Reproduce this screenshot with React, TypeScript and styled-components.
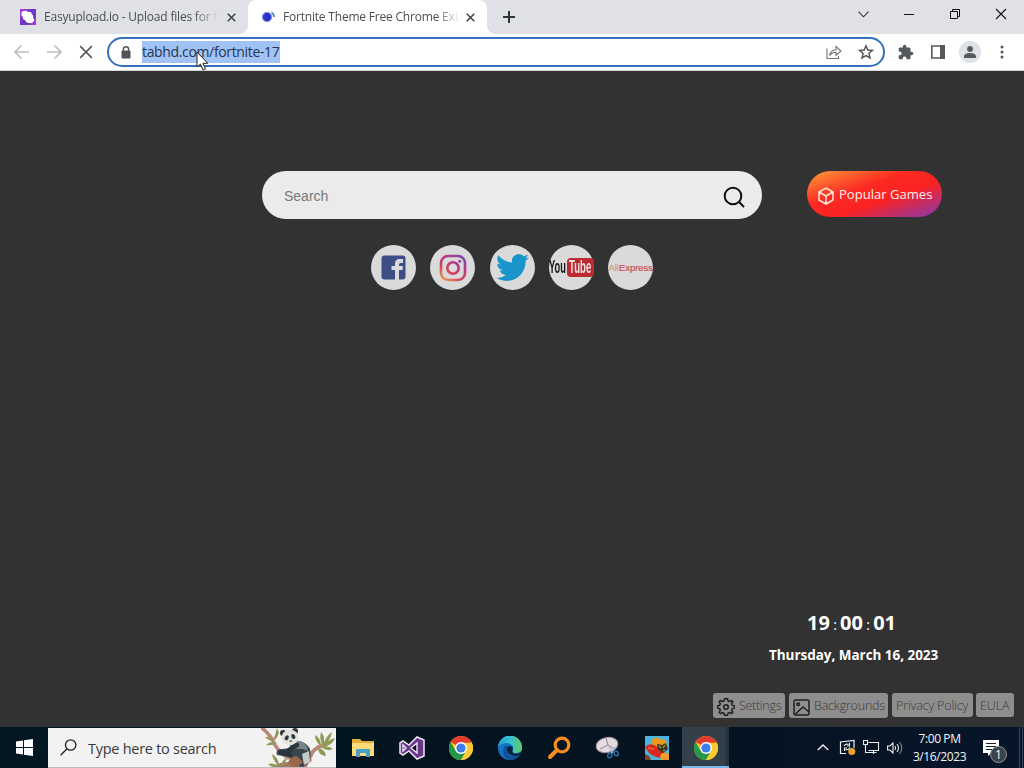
import React from "react";
import styled, { createGlobalStyle } from "styled-components";

const GlobalStyle = createGlobalStyle`
  * { box-sizing: border-box; }
  body { margin: 0; overflow: hidden; background: #323232; }
`;

const Screen = styled.div`
  width: 1024px;
  height: 768px;
  display: flex;
  flex-direction: column;
  overflow: hidden;
  font-family: "Open Sans", "Noto Sans", sans-serif;
  svg { display: block; flex: none; }
`;

const Label = styled.span<{ $size: number; $spacing?: number; $weight?: number; $color?: string }>`
  font-size: ${(p) => p.$size}px;
  letter-spacing: ${(p) => p.$spacing ?? 0}px;
  font-weight: ${(p) => p.$weight ?? 400};
  color: ${(p) => p.$color ?? "inherit"};
  white-space: nowrap;
`;

/* Browser frame */
const TabStrip = styled.div`
  height: 34px;
  flex: none;
  display: flex;
  background: #dfe1e6;
`;

const Tab = styled.div<{ $active?: boolean; $width: number; $pad: number }>`
  position: relative;
  width: ${(p) => p.$width}px;
  padding-left: ${(p) => p.$pad}px;
  display: flex;
  align-items: center;
  background: ${(p) => (p.$active ? "#fff" : "transparent")};
  border-radius: 8px 8px 0 0;
  color: #4b4d50;
  &::before, &::after {
    content: "";
    display: ${(p) => (p.$active ? "block" : "none")};
    position: absolute;
    bottom: 0;
    width: 8px;
    height: 8px;
  }
  &::before { left: -8px; background: radial-gradient(circle at 0 0, transparent 7.5px, #fff 8px); }
  &::after { right: -8px; background: radial-gradient(circle at 100% 0, transparent 7.5px, #fff 8px); }
`;

const TabTitle = styled.div<{ $gap: number; $width: number }>`
  margin-left: ${(p) => p.$gap}px;
  width: ${(p) => p.$width}px;
  height: 20px;
  line-height: 20px;
  display: flex;
  mask-image: linear-gradient(to right, #000 calc(100% - 24px), transparent);
`;

const Slot = styled.div<{ $w: number; $h?: number }>`
  width: ${(p) => p.$w}px;
  height: ${(p) => (p.$h ? `${p.$h}px` : "100%")};
  flex: none;
  display: flex;
  align-items: center;
  justify-content: center;
`;

const Spacer = styled.div`flex: 1;`;

const Toolbar = styled.div`
  height: 37px;
  flex: none;
  display: flex;
  align-items: center;
  padding: 0 6px;
  background: #fff;
  border-bottom: 1px solid #d5d5d5;
`;

const Omnibox = styled.div`
  width: 778px;
  height: 30px;
  margin: 0 5px 0 5px;
  border: 2px solid #3671bb;
  border-radius: 15px;
  display: flex;
  align-items: center;
  padding-left: 9px;
  padding-right: 1px;
`;

const Selected = styled.div`
  margin-left: 8px;
  width: 138px;
  height: 22px;
  line-height: 21px;
  background: #a1c2f5;
  color: #24354d;
  white-space: nowrap;
`;

const Pointer = styled.svg`
  position: absolute;
  left: 196px;
  top: 51px;
`;

const Avatar = styled.div`
  width: 22px;
  height: 22px;
  border-radius: 50%;
  background: #dee1e6;
  display: flex;
  align-items: center;
  justify-content: center;
`;

/* New tab page */
const Page = styled.main`
  flex: 1;
  background: #323232;
  display: flex;
  flex-direction: column;
  padding-top: 100px;
`;

const SearchRow = styled.div`
  display: flex;
  padding-left: 262px;
  height: 48px;
`;

const SearchBox = styled.div`
  width: 500px;
  height: 48px;
  border-radius: 24px;
  background: #ebebeb;
  display: flex;
  align-items: center;
  justify-content: space-between;
  padding: 2px 17px 0 22px;
  font-family: "Liberation Sans", sans-serif;
  svg { margin-top: 2px; }
`;

const GamesButton = styled.div`
  margin-left: 45px;
  width: 135px;
  height: 46px;
  border-radius: 23px;
  background: linear-gradient(to bottom right, #fd9e3c 0%, #fb2a22 38%, #fb2222 60%, #833ab4 100%);
  display: flex;
  align-items: center;
  padding-left: 10px;
  gap: 4px;
  color: #fff0ee;
  svg { margin-top: 4px; }
`;

const Links = styled.nav`
  display: flex;
  gap: 14.3px;
  padding: 26px 0 0 371px;
`;

const LinkCircle = styled.div`
  width: 45px;
  height: 45px;
  border-radius: 50%;
  background: #dadada;
  display: flex;
  align-items: center;
  justify-content: center;
  font-family: "Liberation Sans", sans-serif;
`;

const YouTubeMark = styled.div`
  display: flex;
  align-items: center;
  flex: none;
  font-weight: 700;
  font-size: 17.5px;
  line-height: 19px;
  color: #161616;
`;

const Squeezed = styled.span<{ $w: number; $scale: number }>`
  display: block;
  width: ${(p) => p.$w}px;
  white-space: nowrap;
  transform: scaleX(${(p) => p.$scale});
  transform-origin: left center;
`;

const TubeBox = styled.div`
  width: 27px;
  height: 19px;
  padding-left: 2px;
  border-radius: 4px;
  background: #bb2b31;
  color: #f0dede;
`;

const AliMark = styled.div`
  flex: none;
  font-size: 9.5px;
  letter-spacing: -0.05px;
  color: #c8504e;
  -webkit-text-stroke: 0.2px;
  span { color: #d29a72; }
`;

const Clock = styled.div`
  display: flex;
  justify-content: space-between;
  align-items: center;
  width: 89px;
  height: 28px;
  margin-left: 807px;
  color: #fff;
`;

const Colon = styled.span`
  font-size: 14px;
  padding-top: 4px;
`;

const DateLine = styled.div`
  height: 22px;
  margin: 7px 0 28px 769px;
  line-height: 22px;
  color: #fff;
`;

const FooterRow = styled.div`
  display: flex;
  align-items: flex-start;
  height: 34px;
  padding-left: 713px;
`;

const FooterButton = styled.div<{ $w: number; $h: number; $mr?: number }>`
  width: ${(p) => p.$w}px;
  height: ${(p) => p.$h}px;
  margin-right: ${(p) => p.$mr ?? 4}px;
  padding-left: 4px;
  border-radius: 3px;
  background: #8e8e8e;
  color: #3c3c3c;
  display: flex;
  align-items: center;
  gap: 4px;
  svg { margin-top: 3px; }
`;

/* Windows taskbar */
const Taskbar = styled.footer`
  height: 41px;
  flex: none;
  display: flex;
  align-items: stretch;
  background: linear-gradient(90deg, #021722, #04131f 65%, #07152a);
  color: #f4f6f8;
`;

const TaskSearch = styled.div`
  width: 288px;
  margin-top: 1px;
  display: flex;
  align-items: center;
  padding-left: 12px;
  background: #f2f2f2;
  border-bottom: 1px solid #bbb;
  overflow: hidden;
  color: #3a3a3a;
  > span { padding-top: 2px; }
`;

const TaskItem = styled.div<{ $active?: boolean }>`
  width: ${(p) => (p.$active ? 47 : 49)}px;
  margin-left: ${(p) => (p.$active ? 1 : 0)}px;
  display: flex;
  align-items: center;
  justify-content: center;
  background: ${(p) => (p.$active ? "linear-gradient(90deg, #333f49 43px, #26323c 44px)" : "transparent")};
  border-bottom: ${(p) => (p.$active ? "2px solid #76b9ed" : "0")};
  padding-top: ${(p) => (p.$active ? 2 : 0)}px;
`;

const DateTime = styled.div`
  width: 65px;
  display: flex;
  flex-direction: column;
  align-items: center;
  padding-top: 3px;
  line-height: 18px;
`;

const Notify = styled.div`
  position: relative;
  width: 45px;
  padding: 13px 0 0 11px;
`;

const NotifyBadge = styled.div`
  position: absolute;
  left: 18px;
  top: 19px;
  width: 17px;
  height: 17px;
  border-radius: 50%;
  border: 1px solid #8d949b;
  background: #3c434a;
  color: #fff;
  font-size: 12px;
  line-height: 15px;
  text-align: center;
`;

const ShowDesktop = styled.div`
  width: 7px;
  border-right: 4px solid transparent;
  background: linear-gradient(90deg, transparent 2px, #3d4855 2px, #3d4855 3px, transparent 3px);
`;

const Cross = ({ size, color, weight }: { size: number; color: string; weight: number }) => (
  <svg width={size} height={size} viewBox="0 0 12 12" fill="none" stroke={color} strokeWidth={weight}>
    <path d="M1 1 11 11M11 1 1 11" />
  </svg>
);

const Arrow = ({ flip }: { flip?: boolean }) => (
  <svg width="16" height="16" viewBox="0 0 16 16" fill="none" stroke="#bcbec1" strokeWidth="1.7">
    <path d={flip ? "M1 8H14.5M8.5 1.5 15 8 8.5 14.5" : "M15 8H1.5M7.5 1.5 1 8 7.5 14.5"} />
  </svg>
);

const ChromeLogo = () => (
  <svg width="24" height="24" viewBox="0 0 24 24">
    <circle cx="12" cy="12" r="12" fill="#fcc934" />
    <path d="M12 12 1.6 6A12 12 0 0 1 22.4 6Z" fill="#e33b2e" />
    <path d="M1.6 6A12 12 0 0 0 12 24L17.2 15 12 12 6.8 15Z" fill="#24984a" />
    <path d="M12 6H22.4A12 12 0 0 1 12 24L17.2 15Z" fill="#fcc934" />
    <path d="M12 6.2H22.4" stroke="#e33b2e" strokeWidth="1" />
    <circle cx="12" cy="12" r="6" fill="#fff" />
    <circle cx="12" cy="12" r="4.6" fill="#3a7de6" />
  </svg>
);

const Panda = () => (
  <svg width="75" height="40" viewBox="0 0 75 40" fill="none" strokeLinecap="round">
    <path d="M1 0Q10 7 14 17Q19 25 27 30" stroke="#b98976" strokeWidth="3.4" />
    <path d="M12 12 17 5" stroke="#b98976" strokeWidth="2" />
    <path d="M62 17Q52 21 50 27L43 40" stroke="#b98976" strokeWidth="4" />
    <path d="M13 40Q26 34 36 38L48 32" stroke="#a67865" strokeWidth="5" />
    <g fill="#8f9a57">
      <path d="M4 9Q9 8 14 14 8 13 4 9ZM5 17Q10 12 16 15 11 18 5 17ZM16 0Q20 6 14 12 14 5 16 0ZM11 26Q18 30 18 38 12 33 11 26ZM7 36Q13 34 18 39 12 41 7 36ZM25 30Q26 36 19 38 21 33 25 30Z" />
      <path d="M54 7Q60 10 60 18 54 14 54 7ZM60 4Q65 9 62 18 58 11 60 4ZM71 4Q70 12 62 18 64 9 71 4ZM74 10Q71 18 62 19 66 12 74 10ZM72 21Q66 24 60 19 67 17 72 21ZM65 28Q57 27 57 20 64 21 65 28Z" />
    </g>
    <path d="M28 15Q42 9 49 21Q52 34 42 39Q31 38 28 29L16 27Q14 21 21 21L30 20Z" fill="#38454c" />
    <path d="M36 13Q46 13 47 23Q40 19 31 22Z" fill="#77868b" />
    <path d="M41 26 48 23 49 34 43 37Z" fill="#c3c9c9" />
    <path d="M27 35Q29 28 36 28L42 34 36 39Q30 40 27 35Z" fill="#9b6748" />
    <circle cx="22" cy="5" r="3" fill="#30383b" /><circle cx="34" cy="3" r="3" fill="#30383b" />
    <ellipse cx="29" cy="9.5" rx="8.5" ry="7.7" fill="#e3e3dd" />
    <ellipse cx="25.7" cy="10" rx="1.9" ry="2.6" fill="#30383b" transform="rotate(30 26 10)" />
    <ellipse cx="32.5" cy="8.7" rx="1.9" ry="2.6" fill="#30383b" transform="rotate(-30 32 9)" />
    <path d="M28 12.7 31 12.2 30 14.3Z" fill="#30383b" />
    <path d="M20 24 29 27M36 17 28 22" stroke="#29353d" strokeWidth="4.5" />
  </svg>
);

export default function App() {
  return (
    <Screen>
      <GlobalStyle />
      <TabStrip>
        <Tab $width={248} $pad={20}>
          <svg width="16" height="16" viewBox="0 0 16 16">
            <path fill="#7038c9" d="M0 0h16v16H0z" /><path fill="#a13ad5" d="M0 0h9L0 10zM10 16l6-7v7z" />
            <path d="M1.500 5Q1 2 4 2q2-1 4 1 3-1 4 2 2 2 1 4 2 1 1 3-2 3-5 2-3 0-4-3-3-1-2-3Q1 7 1.500 5Z" fill="#fff" />
          </svg>
          <TabTitle $gap={8} $width={174}><Label $size={12} $spacing={-0.2}>Easyupload.io - Upload files for f</Label></TabTitle>
          <Slot $w={27}><Cross size={9} color="#3f4246" weight={2.1} /></Slot>
        </Tab>
        <Tab $active $width={239} $pad={13}>
          <svg width="15" height="14" viewBox="0 0 15 14" fill="none">
            <circle cx="6" cy="7" r="4.700" fill="#2c3edb" stroke="#8995df" /><ellipse cx="6.500" cy="7" rx="2.500" ry="3.500" fill="#2730b9" />
            <path d="M10.500 2.500Q13 4 13 7" stroke="#4384cf" strokeWidth="1.700" />
          </svg>
          <TabTitle $gap={7} $width={177}><Label $size={12} $spacing={-0.2}>Fortnite Theme Free Chrome Exte</Label></TabTitle>
          <Slot $w={21}><Cross size={9} color="#3f4246" weight={2.1} /></Slot>
        </Tab>
        <Slot $w={44}>
          <svg width="12" height="12" viewBox="0 0 12 12" stroke="#303337" strokeWidth="2"><path d="M6 0V12M0 6H12" /></svg>
        </Slot>
        <Spacer />
        <Slot $w={46} $h={28}>
          <svg width="11" height="7" viewBox="0 0 11 7" fill="none" stroke="#333" strokeWidth="1.1"><path d="M.5.7 5.5 5.8 10.5.7" /></svg>
        </Slot>
        <Slot $w={46} $h={29}><svg width="10" height="1" viewBox="0 0 10 1"><path d="M0 0H10V1H0Z" fill="#111" /></svg></Slot>
        <Slot $w={46} $h={28}>
          <svg width="10" height="10" viewBox="0 0 10 10" fill="none" stroke="#111"><path d="M.5 2.5h7v7h-7zM2.5 2.5v-2h7v7h-2" /></svg>
        </Slot>
        <Slot $w={46} $h={28}><Cross size={12} color="#111" weight={1.1} /></Slot>
      </TabStrip>

      <Toolbar>
        <Slot $w={32}><Arrow /></Slot>
        <Slot $w={32}><Arrow flip /></Slot>
        <Slot $w={32}><Cross size={14} color="#55585c" weight={1.4} /></Slot>
        <Omnibox>
          <Slot $w={16}>
            <svg width="10" height="13" viewBox="0 0 10 13" fill="none">
              <path d="M2.4 6V3.4a2.6 2.6 0 0 1 5.2 0V6" stroke="#505357" strokeWidth="1.4" /><rect x=".5" y="4.5" width="9" height="8" rx="1" fill="#505357" />
            </svg>
          </Slot>
          <Selected><Label $size={14} $spacing={-0.35}>tabhd.com/fortnite-17</Label></Selected>
          <Spacer />
          <Slot $w={32}>
            <svg width="16" height="15" viewBox="0 0 16 15" fill="none" stroke="#707377" strokeWidth="1.1">
              <path d="M1 3.500V13.500H12.500V11" /><path d="M3.500 10.500Q4.500 5 10 4.800V1.500L15 6 10 10.200V7.200Q6 7 3.500 10.500Z" />
            </svg>
          </Slot>
          <Slot $w={32}>
            <svg width="16" height="16" viewBox="0 0 16 16" fill="none" stroke="#55585c" strokeWidth="1.5"><path d="M8 1.8 9.8 6l4.6.4-3.5 3 1.1 4.5L8 11.5l-4 2.4 1.1-4.5-3.5-3L6.2 6Z" /></svg>
          </Slot>
        </Omnibox>
        <Slot $w={32}>
          <svg width="16" height="16" viewBox="1 0 23 23" fill="#55585c"><path d="M20.5 11H19V7a2 2 0 0 0-2-2h-4V3.500a2.500 2.500 0 0 0-5 0V5H4a2 2 0 0 0-2 2v3.800h1.500a2.700 2.700 0 0 1 0 5.400H2V20a2 2 0 0 0 2 2h3.800v-1.500a2.700 2.700 0 0 1 5.400 0V22H17a2 2 0 0 0 2-2v-4h1.500a2.500 2.500 0 0 0 0-5Z" /></svg>
        </Slot>
        <Slot $w={32}>
          <svg width="14" height="14" viewBox="0 0 14 14"><path d="M.8 1H13V13H.8Z" fill="none" stroke="#55585c" strokeWidth="1.6" /><path d="M9 0h5v14H9z" fill="#55585c" /></svg>
        </Slot>
        <Slot $w={32}>
          <Avatar><svg width="12" height="12" viewBox="0 0 12 12" fill="#55585c"><circle cx="6" cy="3" r="2.900" /><path d="M0 12V10Q1 7 6 7T12 10V12Z" /></svg></Avatar>
        </Slot>
        <Slot $w={32}>
          <svg width="4" height="14" viewBox="0 0 4 14" fill="#55585c"><circle cx="2" cy="2" r="1.500" /><circle cx="2" cy="7" r="1.500" /><circle cx="2" cy="12" r="1.500" /></svg>
        </Slot>
      </Toolbar>
      <Pointer width="13" height="21" viewBox="0 0 13 21"><path d="M1 1V16L4.500 13 7 19 9.500 18 7 12.300H11.800Z" fill="#fff" stroke="#222" /></Pointer>

      <Page>
        <SearchRow>
          <SearchBox>
            <Label $size={14} $color="#777">Search</Label>
            <svg width="22" height="22" viewBox="0 0 22 22" fill="none" stroke="#111" strokeWidth="2"><circle cx="10" cy="10" r="8.300" /><path d="M15.800 15.800 21 21" /></svg>
          </SearchBox>
          <GamesButton>
            <svg width="18" height="18" viewBox="0 0 18 18" fill="none" stroke="#ffe9dd" strokeWidth="1.500" strokeLinejoin="round"><path d="M9 1.200 16 5V13L9 17 2 13V5ZM2 5 9 9 16 5M9 9V17" /></svg>
            <Label $size={13} $spacing={0.03}>Popular Games</Label>
          </GamesButton>
        </SearchRow>
        <Links>
          <LinkCircle>
            <svg width="25" height="25" viewBox="0 0 25 25"><rect x=".5" y=".5" width="24" height="24" rx="3" fill="#3d4d86" /><path d="M14 25V15H10.500V11H14V8.500Q14 4 18.500 4H22V8H19.500Q18 8 18 9.500V11H22L21.500 15H18V25Z" fill="#dadada" /></svg>
          </LinkCircle>
          <LinkCircle>
            <svg width="28" height="28" viewBox="0 0 28 28" fill="none" stroke="url(#insta)" strokeWidth="2.600">
              <defs><linearGradient id="insta" x1="4" y1="27" x2="22" y2="1" gradientUnits="userSpaceOnUse"><stop stopColor="#e7a552" /><stop offset=".35" stopColor="#d5425d" /><stop offset=".68" stopColor="#b63986" /><stop offset="1" stopColor="#7b4eaa" /></linearGradient></defs>
              <rect x="2" y="2" width="24" height="24" rx="7" /><circle cx="14" cy="14" r="5.700" /><circle cx="20.700" cy="7.200" r="1.500" fill="#a33c91" stroke="none" />
            </svg>
          </LinkCircle>
          <LinkCircle>
            <svg width="33" height="33" viewBox="0 0 24 24" fill="#1995cc"><path d="M23.950 4.570a10 10 0 0 1-2.820.770 4.960 4.960 0 0 0 2.160-2.720 9.900 9.900 0 0 1-3.120 1.180 4.920 4.920 0 0 0-8.380 4.480C7.690 8.090 4.070 6.130 1.640 3.160a4.820 4.820 0 0 0-.660 2.470c0 1.710.870 3.210 2.190 4.100a4.900 4.900 0 0 1-2.230-.620v.060a4.920 4.920 0 0 0 3.950 4.830 5 5 0 0 1-2.210.080 4.940 4.940 0 0 0 4.600 3.420A9.870 9.870 0 0 1 0 19.540a14 14 0 0 0 7.550 2.210c9.050 0 14-7.500 14-13.980 0-.210 0-.420-.020-.630a9.940 9.940 0 0 0 2.420-2.570Z" /></svg>
          </LinkCircle>
          <LinkCircle>
            <YouTubeMark>
              <Squeezed $w={18} $scale={0.53}>You</Squeezed>
              <TubeBox><Squeezed $w={23} $scale={0.55}>Tube</Squeezed></TubeBox>
            </YouTubeMark>
          </LinkCircle>
          <LinkCircle><AliMark><span>Ali</span>Express</AliMark></LinkCircle>
        </Links>
        <Spacer />
        <Clock>
          <Label $size={20} $weight={700}>19</Label><Colon>:</Colon>
          <Label $size={20} $weight={700}>00</Label><Colon>:</Colon>
          <Label $size={20} $weight={700}>01</Label>
        </Clock>
        <DateLine><Label $size={13.5} $weight={700} $spacing={-0.04}>Thursday, March 16, 2023</Label></DateLine>
        <FooterRow>
          <FooterButton $w={72} $h={25}>
            <svg width="18" height="18" viewBox="0 0 24 24" fill="none" stroke="#202020" strokeWidth="2" strokeLinejoin="round"><circle cx="12" cy="12" r="3" /><path d="m10 1-.7 3-2 .8L4.700 3.200 2.900 5l1.600 2.700-.9 2L.7 10.500v3l2.900.7.9 2L2.900 19l1.900 1.900 2.600-1.600 2 .8L10 23h4l.7-2.900 2-.8 2.500 1.600L21.100 19l-1.600-2.700.9-2 2.900-.8v-3l-2.900-.8-.9-2L21.100 5l-1.900-1.800-2.500 1.600-2-.8L14 1Z" /></svg>
            <Label $size={12.5} $weight={300} $spacing={-0.3}>Settings</Label>
          </FooterButton>
          <FooterButton $w={99} $h={25}>
            <svg width="17" height="17" viewBox="0 0 17 17" fill="none" stroke="#202020" strokeWidth="1.500"><rect x="1" y="1" width="15" height="15" rx="1.500" /><circle cx="5.200" cy="5.200" r="1.300" /><path d="m2.500 15 7.500-7 6 5" /></svg>
            <Label $size={12.5} $weight={300} $spacing={-0.2}>Backgrounds</Label>
          </FooterButton>
          <FooterButton $w={81} $h={24} $mr={3}><Label $size={12.5} $weight={300} $spacing={-0.15}>Privacy Policy</Label></FooterButton>
          <FooterButton $w={38} $h={24}><Label $size={12.5} $weight={300} $spacing={-0.1}>EULA</Label></FooterButton>
        </FooterRow>
      </Page>

      <Taskbar>
        <Slot $w={48}>
          <svg width="17" height="17" viewBox="0 0 17 17" fill="#fff"><path d="M0 2.400 7 1.400V8H0ZM8 1.200 17 0V8H8ZM0 9H7V15.500L0 14.500ZM8 9H17V17L8 15.700Z" /></svg>
        </Slot>
        <TaskSearch>
          <svg width="17" height="17" viewBox="0 0 17 17" fill="none" stroke="#222" strokeWidth="1.300"><circle cx="10.700" cy="6" r="5.200" /><path d="M7 9.800.6 16.200" /></svg>
          <Slot $w={11} />
          <Label $size={14.500} $spacing={-0.27}>Type here to search</Label>
          <Spacer />
          <Panda />
        </TaskSearch>
        <Slot $w={2} />
        <TaskItem>
          <svg width="22" height="20" viewBox="0 0 22 20"><path d="M0 1h8l2 2h12v15H0z" fill="#e5ad38" /><path d="M0 5h22v13H0z" fill="#fbdc79" /><path d="M4 11h14v8h-4v-4H8v4H4z" fill="#4b9fc6" /></svg>
        </TaskItem>
        <TaskItem>
          <svg width="26" height="26" viewBox="0 0 26 26"><path d="M18 2 25 5V21L18 24 10 16 4 20 1 18V8L4 6 10 10Z" fill="#67358b" stroke="#f0e7f5" strokeWidth="1.500" /><path d="m18 8-6 5 6 5ZM4 10v6l3-3Z" fill="#06131e" stroke="#f0e7f5" strokeWidth="1.400" /></svg>
        </TaskItem>
        <TaskItem><ChromeLogo /></TaskItem>
        <TaskItem>
          <svg width="24" height="24" viewBox="0 0 24 24">
            <defs><linearGradient id="edgeTop"><stop stopColor="#299bd8" /><stop offset=".5" stopColor="#36bfd0" /><stop offset="1" stopColor="#63ca63" /></linearGradient></defs>
            <circle cx="12" cy="12" r="12" fill="#1475c5" />
            <path d="M0 11A12 12 0 0 1 24 12Q24 17 18 17 13 17 15 13 16 8 9 7 3 7 0 11Z" fill="url(#edgeTop)" />
            <path d="M9 12Q8 20 16 20L22 18Q19 23 13 24 5 23 5 15 5 10 10 9Z" fill="#164e98" />
            <path d="M11 10Q15 10 15 13 13 17 17 18 21 18 24 15 22 20 17 20 9 19 9 13 9 11 11 10Z" fill="#062138" />
          </svg>
        </TaskItem>
        <TaskItem>
          <svg width="24" height="24" viewBox="0 0 24 24" fill="none" stroke="#f78d1e" strokeLinecap="round"><circle cx="15" cy="9" r="6.800" strokeWidth="3.200" /><path d="m10 14-7 7" strokeWidth="4" /></svg>
        </TaskItem>
        <TaskItem>
          <svg width="26" height="24" viewBox="0 0 26 24" fill="none"><ellipse cx="12" cy="9" rx="11" ry="7.500" fill="#e3dde1" stroke="#a58e97" transform="rotate(-12 12 9)" /><path d="M11 2 13 9 5 13M13 9 20 13" stroke="#8e8990" /><path d="m14 10 4 7M21 11l-5 6" stroke="#9ab4cb" strokeWidth="1.200" /><ellipse cx="15" cy="19.500" rx="2" ry="2.500" stroke="#327abb" strokeWidth="1.300" transform="rotate(25 15 19)" /><ellipse cx="21.500" cy="17.500" rx="2" ry="2.500" stroke="#327abb" strokeWidth="1.300" transform="rotate(-35 21 18)" /></svg>
        </TaskItem>
        <TaskItem>
          <svg width="24" height="24" viewBox="0 0 24 24"><path fill="#4db5dd" d="M0 0h24v24H0z" /><path d="M6 7Q7 1 13 2L20 4 23 10 16 17Z" fill="#e99a22" /><path d="M0 11Q4 7 9 9L18 14Q22 19 18 22 10 22 4 17Z" fill="#d62920" /><path d="M15 20Q18 14 24 18V24H16Z" fill="#f29b2e" /><path d="M12 8 17 9 21 7 23 13 18 17 13 13Z" fill="#39351f" /><path d="m14 10 2 2M20 9l-2 3M20 14l-2 1" stroke="#99a345" strokeWidth="1.300" /><path d="M0 18 4 20 6 24H0Z" fill="#87401e" /><path d="m3 12 6 1" stroke="#f26752" strokeWidth="1.600" /></svg>
        </TaskItem>
        <TaskItem $active><ChromeLogo /></TaskItem>
        <Spacer />
        <Slot $w={25}><svg width="12" height="7" viewBox="0 0 12 7" fill="none" stroke="#eee" strokeWidth="1.400"><path d="M.7 6 6 1 11.300 6" /></svg></Slot>
        <Slot $w={24}>
          <svg width="17" height="17" viewBox="0 0 17 17" fill="none" stroke="#eee" strokeWidth="1.200"><path d="M7 14.500H1.500V3L15 1.500V9M1.500 14.500V3" /><path d="M5 7Q6.500 4.500 9.500 5.500M10.500 4V7H8M11 8.500Q9.500 11.500 6.500 10.500M5.500 12V9H8" /><circle cx="12.800" cy="12.500" r="3.500" fill="#efa12d" stroke="none" /></svg>
        </Slot>
        <Slot $w={24}>
          <svg width="17" height="15" viewBox="0 0 17 15" fill="none" stroke="#eee" strokeWidth="1.100"><path d="M5.500 2.500H15.500V10.500H5.500M.5.500H4.500V4.500H.5ZM2.500 4.500V12.500H13.500M10.500 10.500V14" /></svg>
        </Slot>
        <Slot $w={24}>
          <svg width="16" height="14" viewBox="0 0 16 14" fill="none" stroke="#eee" strokeWidth="1.100"><path d="M.6 5H3L6 2V12L3 9H.6ZM8 5Q9.200 7 8 9M10 3Q13 7 10 11" /><path d="M12.500 1Q17 7 12.500 13" stroke="#818991" /></svg>
        </Slot>
        <DateTime><Label $size={12} $spacing={-0.4}>7:00 PM</Label><Label $size={12} $spacing={-0.4}>3/16/2023</Label></DateTime>
        <Notify>
          <svg width="16" height="16" viewBox="0 0 16 16"><path d="M0 0H16V13H8L5 16V13H0Z" fill="#fff" /><path d="M3 3.500H13M3 6.500H13M3 9.500H9" stroke="#102030" /></svg>
          <NotifyBadge>1</NotifyBadge>
        </Notify>
        <ShowDesktop />
      </Taskbar>
    </Screen>
  );
}
